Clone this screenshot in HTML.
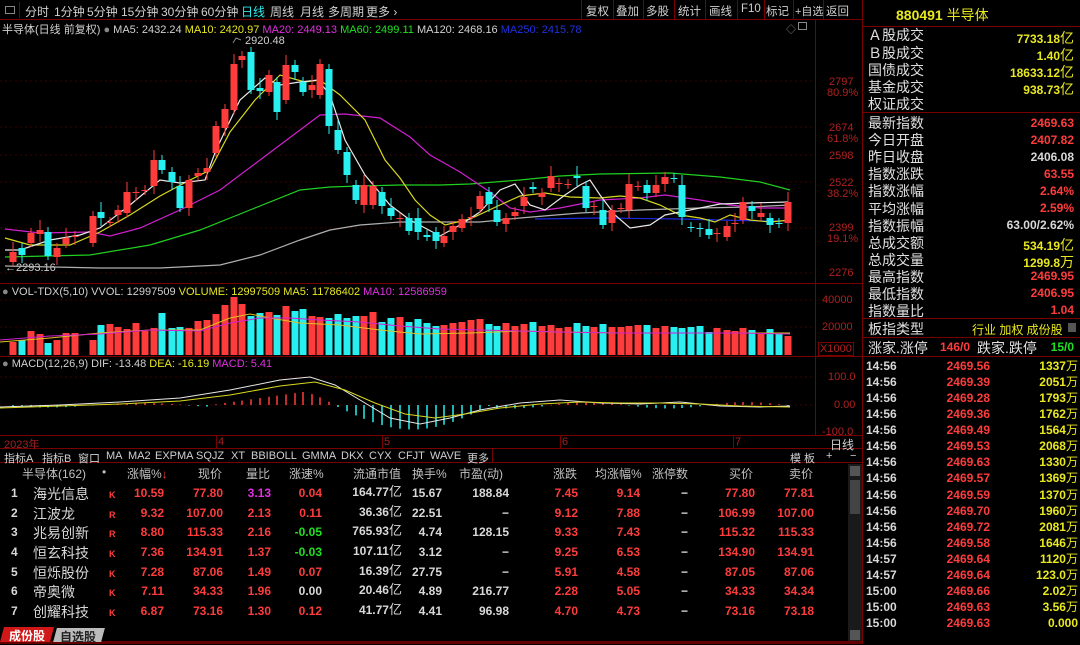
<!DOCTYPE html>
<html><head><meta charset="utf-8">
<style>
*{margin:0;padding:0;box-sizing:border-box}
body{width:1080px;height:644px;background:#000;overflow:hidden;position:relative;font-family:"Liberation Sans","Noto Sans CJK SC",sans-serif;color:#c8c8c8}
.a{position:absolute;white-space:nowrap}
.tb{font-size:12px;top:3px;color:#d0d0d0}
.r{color:#ff3c3c}.y{color:#e8e820}.c{color:#30e8e8}.m{color:#e030e0}.g{color:#20e020}.w{color:#d8d8d8}
.ax{color:#b02020;font-size:11px}
.rp{font-size:14px;color:#e0e0e0;left:868px}
.rv{font-size:12px;font-weight:bold;right:6px}
.tr{font-size:12px;font-weight:bold}
.num{position:absolute;top:0;text-align:right;font-size:12px;font-weight:bold;line-height:14px;white-space:nowrap}
.num span{line-height:14px}
.hd{font-size:12px;color:#c0c0c0;top:465px}
.tab{font-size:11px;top:450px;color:#d0d0d0}
</style></head><body>
<!-- top toolbar -->
<div class="a" style="left:0;top:0;width:862px;height:20px;border-bottom:1px solid #700"></div>
<div class="a" style="left:2px;top:2px;width:18px;height:16px;border-right:1px solid #700"></div>
<div class="a" style="left:5px;top:6px;width:10px;height:8px;border:1px solid #888"></div>
<div class="a tb" style="left:25px">分时</div>
<div class="a tb" style="left:54px">1分钟</div>
<div class="a tb" style="left:87px">5分钟</div>
<div class="a tb" style="left:121px">15分钟</div>
<div class="a tb" style="left:161px">30分钟</div>
<div class="a tb" style="left:201px">60分钟</div>
<div class="a tb c" style="left:241px">日线</div>
<div class="a tb" style="left:270px">周线</div>
<div class="a tb" style="left:300px">月线</div>
<div class="a tb" style="left:328px">多周期</div>
<div class="a tb" style="left:366px">更多 ›</div>
<div class="a" style="left:581px;top:0;width:1px;height:20px;background:#700"></div>
<div class="a tb" style="left:586px;font-size:11.5px">复权</div><div class="a" style="left:613px;top:0;width:1px;height:20px;background:#700"></div>
<div class="a tb" style="left:616px;font-size:11.5px">叠加</div><div class="a" style="left:643px;top:0;width:1px;height:20px;background:#700"></div>
<div class="a tb" style="left:646px;font-size:11.5px">多股</div><div class="a" style="left:674px;top:0;width:1px;height:20px;background:#700"></div>
<div class="a tb" style="left:678px;font-size:11.5px">统计</div><div class="a" style="left:705px;top:0;width:1px;height:20px;background:#700"></div>
<div class="a tb" style="left:709px;font-size:11.5px">画线</div><div class="a" style="left:737px;top:0;width:1px;height:20px;background:#700"></div>
<div class="a tb" style="left:741px;font-size:11.5px">F10</div><div class="a" style="left:764px;top:0;width:1px;height:20px;background:#700"></div>
<div class="a tb" style="left:766px;font-size:11.5px">标记</div><div class="a" style="left:793px;top:0;width:1px;height:20px;background:#700"></div>
<div class="a tb" style="left:795px;font-size:11px">+自选</div><div class="a" style="left:823px;top:0;width:1px;height:20px;background:#700"></div>
<div class="a tb" style="left:826px;font-size:11.5px">返回</div>
<!-- chart title -->
<div class="a" style="left:2px;top:21px;font-size:11px;color:#d0d0d0">半导体(日线 前复权) <span style="color:#888">●</span> MA5: 2432.24 <span class="y">MA10: 2420.97</span> <span class="m">MA20: 2449.13</span> <span class="g">MA60: 2499.11</span> MA120: 2468.16 <span style="color:#2030e0">MA250: 2415.78</span></div>
<div class="a" style="left:786px;top:21px;font-size:10px;color:#888">◇</div>
<div class="a" style="left:798px;top:22px;width:9px;height:8px;border:1px solid #888"></div>
<!-- frame lines -->
<div class="a" style="left:815px;top:20px;width:1px;height:416px;background:#700"></div>
<div class="a" style="left:862px;top:0;width:1px;height:644px;background:#700"></div>
<div class="a" style="left:0;top:283px;width:862px;height:1px;background:#700"></div>
<div class="a" style="left:0;top:356px;width:862px;height:1px;background:#700"></div>
<div class="a" style="left:0;top:435px;width:862px;height:1px;background:#700"></div>
<div class="a" style="left:0;top:448px;width:862px;height:1px;background:#700"></div>
<div class="a" style="left:0;top:462px;width:862px;height:1px;background:#700"></div>
<!-- axis labels -->
<div class="a ax" style="left:829px;top:76px">2797</div><div class="a ax" style="left:827px;top:87px">80.9%</div>
<div class="a ax" style="left:829px;top:122px">2674</div><div class="a ax" style="left:827px;top:133px">61.8%</div>
<div class="a ax" style="left:829px;top:150px">2598</div>
<div class="a ax" style="left:829px;top:177px">2522</div><div class="a ax" style="left:827px;top:188px">38.2%</div>
<div class="a ax" style="left:829px;top:222px">2399</div><div class="a ax" style="left:827px;top:233px">19.1%</div>
<div class="a ax" style="left:829px;top:267px">2276</div>
<div class="a ax" style="left:822px;top:294px">40000</div>
<div class="a ax" style="left:822px;top:321px">20000</div>
<div class="a ax" style="left:818px;top:342px;border:1px solid #700;padding:0 1px">X1000</div>
<div class="a ax" style="left:828px;top:371px">100.0</div>
<div class="a ax" style="left:834px;top:399px">0.00</div>
<div class="a ax" style="left:822px;top:426px">-100.0</div>
<div class="a" style="left:5px;top:262px;font-size:11px;color:#d0d0d0">←2293.16</div>
<div class="a" style="left:245px;top:35px;font-size:11px;color:#d0d0d0">2920.48</div>
<div class="a" style="left:2px;top:286px;font-size:11px;color:#d0d0d0"><span style="color:#888">●</span> VOL-TDX(5,10) VVOL: 12997509 <span class="y">VOLUME: 12997509 MA5: 11786402</span> <span class="m">MA10: 12586959</span></div>
<div class="a" style="left:2px;top:358px;font-size:11px;color:#d0d0d0"><span style="color:#888">●</span> MACD(12,26,9) DIF: -13.48 <span class="y">DEA: -16.19</span> <span class="m">MACD: 5.41</span></div>
<!-- date row -->
<div class="a" style="left:4px;top:436px;font-size:11px;color:#a02020">2023年</div>
<div class="a" style="left:216px;top:436px;font-size:11px;color:#a02020;border-left:1px solid #700;padding-left:1px">4</div>
<div class="a" style="left:382px;top:436px;font-size:11px;color:#a02020;border-left:1px solid #700;padding-left:1px">5</div>
<div class="a" style="left:560px;top:436px;font-size:11px;color:#a02020;border-left:1px solid #700;padding-left:1px">6</div>
<div class="a" style="left:733px;top:436px;font-size:11px;color:#a02020;border-left:1px solid #700;padding-left:1px">7</div>
<div class="a" style="left:830px;top:436px;font-size:12px;color:#d0d0d0">日线</div>
<!-- tabs -->
<div class="a tab" style="left:4px">指标A</div>
<div class="a tab" style="left:42px">指标B</div>
<div class="a tab" style="left:78px">窗口</div>
<div class="a tab" style="left:106px">MA</div>
<div class="a tab c" style="left:128px">MA2</div>
<div class="a tab" style="left:155px">EXPMA</div>
<div class="a tab" style="left:196px">SQJZ</div>
<div class="a tab" style="left:231px">XT</div>
<div class="a tab" style="left:251px">BBIBOLL</div>
<div class="a tab" style="left:302px">GMMA</div>
<div class="a tab" style="left:341px">DKX</div>
<div class="a tab" style="left:369px">CYX</div>
<div class="a tab" style="left:398px">CFJT</div>
<div class="a tab" style="left:430px">WAVE</div>
<div class="a tab" style="left:467px">更多</div>
<div class="a" style="left:0;top:449px;width:493px;height:13px;border-right:1px solid #700"></div>
<div class="a tab" style="left:790px">模 板</div>
<div class="a tab" style="left:826px">+</div>
<div class="a tab" style="left:850px">−</div>
<!-- table header -->
<div class="a hd" style="left:22px">半导体(162)</div>
<div class="a hd" style="left:102px">•</div>
<div class="a hd" style="left:127px">涨幅%<span class="r">↓</span></div>
<div class="a hd" style="left:198px">现价</div>
<div class="a hd" style="left:246px">量比</div>
<div class="a hd" style="left:289px">涨速%</div>
<div class="a hd" style="left:353px">流通市值</div>
<div class="a hd" style="left:412px">换手%</div>
<div class="a hd" style="left:459px">市盈(动)</div>
<div class="a hd" style="left:553px">涨跌</div>
<div class="a hd" style="left:595px">均涨幅%</div>
<div class="a hd" style="left:652px">涨停数</div>
<div class="a hd" style="left:729px">买价</div>
<div class="a hd" style="left:789px">卖价</div>
<!-- scrollbar -->
<div class="a" style="left:848px;top:464px;width:14px;height:180px;background:#1a1a1a"></div>
<div class="a" style="left:850px;top:466px;width:10px;height:10px;background:#555"></div>
<div class="a" style="left:850px;top:480px;width:10px;height:34px;background:#444"></div>
<div class="a" style="left:850px;top:630px;width:10px;height:10px;background:#555"></div>
<!-- table rows -->
<div class="a" style="left:0;top:486px;width:848px;font-size:12px">
 <div style="position:relative;height:19.7px">
  <span class="a w tr" style="left:11px">1</span><span class="a w" style="left:33px;font-size:14px;top:-2px">海光信息</span><span class="a r" style="left:109px;font-size:9px;top:4px;font-weight:bold">K</span>
  <span class="num r" style="right:684px">10.59</span><span class="num r" style="right:625px">77.80</span><span class="num m" style="right:577px">3.13</span><span class="num r" style="right:526px">0.04</span><span class="num w" style="right:446px;top:-1px">164.77<span style="font-weight:normal;font-size:13px">亿</span></span><span class="num w" style="right:406px">15.67</span><span class="num w" style="right:339px">188.84</span><span class="num r" style="right:270px">7.45</span><span class="num r" style="right:208px">9.14</span><span class="num w" style="right:160px">−</span><span class="num r" style="right:93px">77.80</span><span class="num r" style="right:34px">77.81</span>
 </div>
 <div style="position:relative;height:19.7px">
  <span class="a w tr" style="left:11px">2</span><span class="a w" style="left:33px;font-size:14px;top:-2px">江波龙</span><span class="a r" style="left:109px;font-size:9px;top:4px;font-weight:bold">R</span>
  <span class="num r" style="right:684px">9.32</span><span class="num r" style="right:625px">107.00</span><span class="num r" style="right:577px">2.13</span><span class="num r" style="right:526px">0.11</span><span class="num w" style="right:446px;top:-1px">36.36<span style="font-weight:normal;font-size:13px">亿</span></span><span class="num w" style="right:406px">22.51</span><span class="num w" style="right:339px">−</span><span class="num r" style="right:270px">9.12</span><span class="num r" style="right:208px">7.88</span><span class="num w" style="right:160px">−</span><span class="num r" style="right:93px">106.99</span><span class="num r" style="right:34px">107.00</span>
 </div>
 <div style="position:relative;height:19.7px">
  <span class="a w tr" style="left:11px">3</span><span class="a w" style="left:33px;font-size:14px;top:-2px">兆易创新</span><span class="a r" style="left:109px;font-size:9px;top:4px;font-weight:bold">R</span>
  <span class="num r" style="right:684px">8.80</span><span class="num r" style="right:625px">115.33</span><span class="num r" style="right:577px">2.16</span><span class="num g" style="right:526px">-0.05</span><span class="num w" style="right:446px;top:-1px">765.93<span style="font-weight:normal;font-size:13px">亿</span></span><span class="num w" style="right:406px">4.74</span><span class="num w" style="right:339px">128.15</span><span class="num r" style="right:270px">9.33</span><span class="num r" style="right:208px">7.43</span><span class="num w" style="right:160px">−</span><span class="num r" style="right:93px">115.32</span><span class="num r" style="right:34px">115.33</span>
 </div>
 <div style="position:relative;height:19.7px">
  <span class="a w tr" style="left:11px">4</span><span class="a w" style="left:33px;font-size:14px;top:-2px">恒玄科技</span><span class="a r" style="left:109px;font-size:9px;top:4px;font-weight:bold">K</span>
  <span class="num r" style="right:684px">7.36</span><span class="num r" style="right:625px">134.91</span><span class="num r" style="right:577px">1.37</span><span class="num g" style="right:526px">-0.03</span><span class="num w" style="right:446px;top:-1px">107.11<span style="font-weight:normal;font-size:13px">亿</span></span><span class="num w" style="right:406px">3.12</span><span class="num w" style="right:339px">−</span><span class="num r" style="right:270px">9.25</span><span class="num r" style="right:208px">6.53</span><span class="num w" style="right:160px">−</span><span class="num r" style="right:93px">134.90</span><span class="num r" style="right:34px">134.91</span>
 </div>
 <div style="position:relative;height:19.7px">
  <span class="a w tr" style="left:11px">5</span><span class="a w" style="left:33px;font-size:14px;top:-2px">恒烁股份</span><span class="a r" style="left:109px;font-size:9px;top:4px;font-weight:bold">K</span>
  <span class="num r" style="right:684px">7.28</span><span class="num r" style="right:625px">87.06</span><span class="num r" style="right:577px">1.49</span><span class="num r" style="right:526px">0.07</span><span class="num w" style="right:446px;top:-1px">16.39<span style="font-weight:normal;font-size:13px">亿</span></span><span class="num w" style="right:406px">27.75</span><span class="num w" style="right:339px">−</span><span class="num r" style="right:270px">5.91</span><span class="num r" style="right:208px">4.58</span><span class="num w" style="right:160px">−</span><span class="num r" style="right:93px">87.05</span><span class="num r" style="right:34px">87.06</span>
 </div>
 <div style="position:relative;height:19.7px">
  <span class="a w tr" style="left:11px">6</span><span class="a w" style="left:33px;font-size:14px;top:-2px">帝奥微</span><span class="a r" style="left:109px;font-size:9px;top:4px;font-weight:bold">K</span>
  <span class="num r" style="right:684px">7.11</span><span class="num r" style="right:625px">34.33</span><span class="num r" style="right:577px">1.96</span><span class="num w" style="right:526px">0.00</span><span class="num w" style="right:446px;top:-1px">20.46<span style="font-weight:normal;font-size:13px">亿</span></span><span class="num w" style="right:406px">4.89</span><span class="num w" style="right:339px">216.77</span><span class="num r" style="right:270px">2.28</span><span class="num r" style="right:208px">5.05</span><span class="num w" style="right:160px">−</span><span class="num r" style="right:93px">34.33</span><span class="num r" style="right:34px">34.34</span>
 </div>
 <div style="position:relative;height:19.7px">
  <span class="a w tr" style="left:11px">7</span><span class="a w" style="left:33px;font-size:14px;top:-2px">创耀科技</span><span class="a r" style="left:109px;font-size:9px;top:4px;font-weight:bold">K</span>
  <span class="num r" style="right:684px">6.87</span><span class="num r" style="right:625px">73.16</span><span class="num r" style="right:577px">1.30</span><span class="num r" style="right:526px">0.12</span><span class="num w" style="right:446px;top:-1px">41.77<span style="font-weight:normal;font-size:13px">亿</span></span><span class="num w" style="right:406px">4.41</span><span class="num w" style="right:339px">96.98</span><span class="num r" style="right:270px">4.70</span><span class="num r" style="right:208px">4.73</span><span class="num w" style="right:160px">−</span><span class="num r" style="right:93px">73.16</span><span class="num r" style="right:34px">73.18</span>
 </div>
</div>
<!-- bottom tabs -->
<div class="a" style="left:0;top:641px;width:862px;height:3px;background:#600"></div>
<div class="a" style="left:2px;top:627px;width:50px;height:15px;background:#d01818;transform:skewX(-15deg)"></div>
<div class="a" style="left:9px;top:627px;font-size:12px;font-weight:bold;color:#fff">成份股</div>
<div class="a" style="left:55px;top:628px;width:48px;height:14px;background:#bbb;transform:skewX(-15deg)"></div>
<div class="a" style="left:60px;top:628px;font-size:12px;font-weight:bold;color:#222">自选股</div>
<!-- right panel -->
<div class="a" style="left:863px;top:26px;width:217px;height:1px;background:#700"></div>
<div class="a" style="left:896px;top:5px;font-size:14px;color:#e8e820"><b>880491</b> 半导体</div>
<div class="a rp" style="top:25px">Ａ股成交</div><div class="a rv y" style="top:28px">7733.18<span style="font-weight:normal;font-size:14px">亿</span></div>
<div class="a rp" style="top:43px">Ｂ股成交</div><div class="a rv y" style="top:45px">1.40<span style="font-weight:normal;font-size:14px">亿</span></div>
<div class="a rp" style="top:60px">国债成交</div><div class="a rv y" style="top:62px">18633.12<span style="font-weight:normal;font-size:14px">亿</span></div>
<div class="a rp" style="top:77px">基金成交</div><div class="a rv y" style="top:79px">938.73<span style="font-weight:normal;font-size:14px">亿</span></div>
<div class="a rp" style="top:94px">权证成交</div>
<div class="a" style="left:863px;top:112px;width:217px;height:1px;background:#700"></div>
<div class="a rp" style="top:113px">最新指数</div><div class="a rv r" style="top:116px">2469.63</div>
<div class="a rp" style="top:130px">今日开盘</div><div class="a rv r" style="top:133px">2407.82</div>
<div class="a rp" style="top:147px">昨日收盘</div><div class="a rv w" style="top:150px">2406.08</div>
<div class="a rp" style="top:164px">指数涨跌</div><div class="a rv r" style="top:167px">63.55</div>
<div class="a rp" style="top:181px">指数涨幅</div><div class="a rv r" style="top:184px">2.64%</div>
<div class="a rp" style="top:199px">平均涨幅</div><div class="a rv r" style="top:201px">2.59%</div>
<div class="a rp" style="top:216px">指数振幅</div><div class="a rv w" style="top:218px">63.00/2.62%</div>
<div class="a rp" style="top:233px">总成交额</div><div class="a rv y" style="top:235px">534.19<span style="font-weight:normal;font-size:14px">亿</span></div>
<div class="a rp" style="top:250px">总成交量</div><div class="a rv y" style="top:252px">1299.8<span style="font-weight:normal;font-size:14px">万</span></div>
<div class="a rp" style="top:267px">最高指数</div><div class="a rv r" style="top:269px">2469.95</div>
<div class="a rp" style="top:284px">最低指数</div><div class="a rv r" style="top:286px">2406.95</div>
<div class="a rp" style="top:301px">指数量比</div><div class="a rv r" style="top:303px">1.04</div>
<div class="a" style="left:863px;top:318px;width:217px;height:1px;background:#700"></div>
<div class="a rp" style="top:319px">板指类型</div><div class="a y" style="left:972px;top:321px;font-size:12px">行业 加权 成份股</div><div class="a" style="left:1068px;top:323px;width:8px;height:9px;background:#555"></div>
<div class="a" style="left:863px;top:337px;width:217px;height:1px;background:#700"></div>
<div class="a rp" style="top:338px">涨家.涨停</div><div class="a r" style="left:940px;top:340px;font-size:12px;font-weight:bold">146/0</div>
<div class="a" style="left:977px;top:338px;font-size:14px;color:#e0e0e0">跌家.跌停</div><div class="a rv g" style="top:340px">15/0</div>
<div class="a" style="left:863px;top:356px;width:217px;height:1px;background:#700"></div>
<div class="a" style="left:866px;top:358px;width:212px;font-size:12px;font-weight:bold;line-height:16.06px">
<div style="display:flex"><span class="w" style="width:70px">14:56</span><span class="r" style="width:54px;text-align:right">2469.56</span><span class="y" style="flex:1;text-align:right">1337<span style="font-weight:normal">万</span></span></div>
<div style="display:flex"><span class="w" style="width:70px">14:56</span><span class="r" style="width:54px;text-align:right">2469.39</span><span class="y" style="flex:1;text-align:right">2051<span style="font-weight:normal">万</span></span></div>
<div style="display:flex"><span class="w" style="width:70px">14:56</span><span class="r" style="width:54px;text-align:right">2469.28</span><span class="y" style="flex:1;text-align:right">1793<span style="font-weight:normal">万</span></span></div>
<div style="display:flex"><span class="w" style="width:70px">14:56</span><span class="r" style="width:54px;text-align:right">2469.36</span><span class="y" style="flex:1;text-align:right">1762<span style="font-weight:normal">万</span></span></div>
<div style="display:flex"><span class="w" style="width:70px">14:56</span><span class="r" style="width:54px;text-align:right">2469.49</span><span class="y" style="flex:1;text-align:right">1564<span style="font-weight:normal">万</span></span></div>
<div style="display:flex"><span class="w" style="width:70px">14:56</span><span class="r" style="width:54px;text-align:right">2469.53</span><span class="y" style="flex:1;text-align:right">2068<span style="font-weight:normal">万</span></span></div>
<div style="display:flex"><span class="w" style="width:70px">14:56</span><span class="r" style="width:54px;text-align:right">2469.63</span><span class="y" style="flex:1;text-align:right">1330<span style="font-weight:normal">万</span></span></div>
<div style="display:flex"><span class="w" style="width:70px">14:56</span><span class="r" style="width:54px;text-align:right">2469.57</span><span class="y" style="flex:1;text-align:right">1369<span style="font-weight:normal">万</span></span></div>
<div style="display:flex"><span class="w" style="width:70px">14:56</span><span class="r" style="width:54px;text-align:right">2469.59</span><span class="y" style="flex:1;text-align:right">1370<span style="font-weight:normal">万</span></span></div>
<div style="display:flex"><span class="w" style="width:70px">14:56</span><span class="r" style="width:54px;text-align:right">2469.70</span><span class="y" style="flex:1;text-align:right">1960<span style="font-weight:normal">万</span></span></div>
<div style="display:flex"><span class="w" style="width:70px">14:56</span><span class="r" style="width:54px;text-align:right">2469.72</span><span class="y" style="flex:1;text-align:right">2081<span style="font-weight:normal">万</span></span></div>
<div style="display:flex"><span class="w" style="width:70px">14:56</span><span class="r" style="width:54px;text-align:right">2469.58</span><span class="y" style="flex:1;text-align:right">1646<span style="font-weight:normal">万</span></span></div>
<div style="display:flex"><span class="w" style="width:70px">14:57</span><span class="r" style="width:54px;text-align:right">2469.64</span><span class="y" style="flex:1;text-align:right">1120<span style="font-weight:normal">万</span></span></div>
<div style="display:flex"><span class="w" style="width:70px">14:57</span><span class="r" style="width:54px;text-align:right">2469.64</span><span class="y" style="flex:1;text-align:right">123.0<span style="font-weight:normal">万</span></span></div>
<div style="display:flex"><span class="w" style="width:70px">15:00</span><span class="r" style="width:54px;text-align:right">2469.66</span><span class="y" style="flex:1;text-align:right">2.02<span style="font-weight:normal">万</span></span></div>
<div style="display:flex"><span class="w" style="width:70px">15:00</span><span class="r" style="width:54px;text-align:right">2469.63</span><span class="y" style="flex:1;text-align:right">3.56<span style="font-weight:normal">万</span></span></div>
<div style="display:flex"><span class="w" style="width:70px">15:00</span><span class="r" style="width:54px;text-align:right">2469.63</span><span class="y" style="flex:1;text-align:right">0.000</span></div>
</div>
<!-- charts -->
<svg class="a" style="left:0;top:0" width="815" height="436" id="ch">
<g stroke="#3a0000" stroke-dasharray="2,3" stroke-width="1">
<line x1="0" y1="81" x2="815" y2="81"/><line x1="0" y1="127" x2="815" y2="127"/><line x1="0" y1="155" x2="815" y2="155"/><line x1="0" y1="182" x2="815" y2="182"/><line x1="0" y1="228" x2="815" y2="228"/><line x1="0" y1="273" x2="815" y2="273"/>
<line x1="0" y1="300" x2="815" y2="300"/><line x1="0" y1="327" x2="815" y2="327"/><line x1="0" y1="377" x2="815" y2="377"/><line x1="0" y1="405" x2="815" y2="405"/>
</g>
<g fill="none" stroke-width="1.2">
<polyline stroke="#1e28e0" points="535,219 600,218 680,219 760,221 788,221"/>
<polyline stroke="#b0b0b0" points="5,266 100,268 160,268 220,265 260,255 300,240 330,230 360,225 400,222 440,222 480,222 520,218 580,213 640,210 700,208 750,207 790,205"/>
<polyline stroke="#20d020" points="5,257 90,255 150,245 200,230 250,210 300,190 330,187 360,186 400,185 440,185 470,184 520,180 560,176 600,174 670,173 720,177 760,182 790,190"/>
<polyline stroke="#d020d0" points="5,229 40,233 90,232 110,236 140,228 180,210 220,190 260,160 300,130 320,115 345,114 380,118 410,137 430,155 460,172 490,192 510,208 530,212 560,208 600,200 640,198 665,195 700,200 730,205 760,208 790,208"/>
<polyline stroke="#d8d820" points="5,238 30,245 70,245 100,232 130,215 160,196 190,180 210,170 230,132 255,100 280,75 305,82 320,80 340,95 365,120 385,160 400,178 415,200 430,215 445,225 470,219 500,205 520,196 545,193 570,197 600,198 620,196 640,198 660,205 680,215 700,218 715,222 730,215 750,220 770,222 790,220"/>
<polyline stroke="#e8e8e8" points="5,250 20,250 50,240 80,235 100,228 130,205 160,180 180,183 205,180 216,150 240,100 265,78 280,85 300,82 318,80 330,95 345,140 365,175 390,205 410,220 440,236 460,225 480,212 500,190 515,184 530,205 545,210 565,195 580,185 590,180 600,195 615,215 630,228 650,225 665,215 690,210 720,204 750,203 788,202"/>
</g>
<g id="cd"></g><g id="vol"></g><g id="mc"></g>
<polyline fill="none" stroke="#888" points="233,43 236,38 241,40"/>
</svg>
<script>
var C=[[13,'r',252,262],[22,'c',248,255],[31,'r',233,243],[40,'r',230,234],[48,'c',232,256],[57,'r',248,257],[66,'r',238,244],[75,'r',236,237],[93,'r',216,243],[101,'c',212,218],[110,'r',222,223],[118,'r',210,215],[127,'r',192,213],[136,'r',192,193],[145,'r',190,191],[154,'r',160,186],[162,'c',160,170],[172,'c',172,182],[180,'c',186,208],[189,'r',180,208],[198,'r',173,176],[207,'r',168,172],[216,'r',126,153],[225,'r',109,128],[234,'r',64,110],[242,'r',56,60],[251,'c',52,90],[260,'c',88,91],[269,'r',75,92],[277,'c',82,112],[286,'r',65,100],[295,'c',65,72],[303,'c',82,92],[312,'r',85,90],[320,'r',64,95],[329,'c',69,126],[338,'c',130,150],[347,'c',152,175],[356,'c',185,200],[364,'r',185,205],[373,'r',186,205],[382,'c',192,206],[391,'c',208,216],[400,'r',218,219],[409,'c',218,231],[418,'c',218,232],[427,'c',235,237],[436,'c',232,241],[444,'r',236,243],[453,'r',226,232],[462,'r',219,228],[471,'r',217,218],[480,'r',196,209],[489,'c',192,204],[497,'c',210,222],[506,'r',218,224],[515,'r',212,216],[524,'r',197,206],[533,'c',187,189],[542,'r',193,197],[551,'r',176,188],[559,'r',183,184],[568,'r',184,185],[577,'c',176,178],[586,'c',186,208],[594,'r',206,207],[603,'c',210,225],[612,'r',210,223],[621,'r',208,209],[629,'r',184,210],[638,'r',186,187],[647,'c',185,193],[656,'r',185,193],[665,'r',177,184],[674,'c',178,179],[682,'c',185,217],[691,'c',227,228],[700,'c',228,229],[709,'c',229,235],[717,'r',233,234],[727,'r',226,237],[735,'r',223,224],[743,'r',202,220],[752,'c',206,211],[761,'r',213,217],[770,'c',218,225],[779,'c',223,224],[788,'r',202,223]];
var V=[342,340,331,334,343,340,333,333,340,325,324,327,329,323,331,328,313,328,327,328,321,320,314,305,297,304,316,313,312,315,306,311,309,316,317,318,314,318,316,316,312,322,318,317,322,319,323,326,325,323,322,320,319,324,326,323,326,324,322,326,325,328,327,323,326,327,324,327,327,326,325,325,328,326,327,328,327,326,332,328,330,331,328,330,333,329,333,336,332,334];
var s='',v='',m='';var col={r:'#ff3c3c',c:'#28f0f0'};
C.forEach(function(d,i){var x=d[0],c=col[d[1]];var hi=Math.min(d[2],d[3])-(i%3==0?10:5),lo=Math.max(d[2],d[3])+(i%2?8:4);
s+='<line x1="'+x+'" y1="'+hi+'" x2="'+x+'" y2="'+lo+'" stroke="'+c+'"/>';
s+='<rect x="'+(x-3.5)+'" y="'+d[2]+'" width="7" height="'+Math.max(1,d[3]-d[2])+'" fill="'+c+'"/>';
var h=V[i%V.length];v+='<rect x="'+(x-3.5)+'" y="'+h+'" width="7" height="'+(355-h)+'" fill="'+c+'"/>';
var mh;if(x<210)mh=(Math.sin(x/30)*2);else if(x<335)mh=-(x-210)*0.14*Math.min(1,(335-x)/30);else if(x<490)mh=Math.sin((x-335)/155*Math.PI)*24;else mh=Math.sin(x/25)*3;
var mc=mh<0?'#ff3c3c':'#28f0f0';var y0=405,y1=405+mh;m+='<line x1="'+x+'" y1="'+Math.min(y0,y1)+'" x2="'+x+'" y2="'+Math.max(y0,y1+0.5)+'" stroke="'+mc+'" stroke-width="1.5"/>';});
document.getElementById('cd').innerHTML=s;document.getElementById('vol').innerHTML=v+
'<polyline fill="none" stroke="#e0c020" points="0,342 50,338 100,333 150,330 200,330 230,318 250,314 270,318 300,323 340,325 380,330 420,334 470,333 520,331 560,332 620,333 680,333 740,333 790,333"/>'+
'<polyline fill="none" stroke="#d020d0" points="0,340 50,336 100,334 150,330 200,331 230,323 260,318 290,318 320,320 360,322 400,326 440,329 480,330 520,331 560,332 620,333 680,333 740,333 790,334"/>';
document.getElementById('mc').innerHTML=m+'<polyline fill="none" stroke="#e8e8e8" points="0,407 60,405 120,402 180,398 230,390 280,380 310,377 335,385 360,400 390,418 420,424 450,418 480,410 520,403 560,400 600,403 640,404 680,402 720,406 760,407 790,406"/><polyline fill="none" stroke="#d8d820" points="0,408 60,406 120,404 180,401 230,395 280,386 315,382 345,390 375,403 405,414 435,418 465,414 500,408 540,404 580,402 620,403 660,403 700,404 740,406 790,407"/>';
</script>
</body></html>
